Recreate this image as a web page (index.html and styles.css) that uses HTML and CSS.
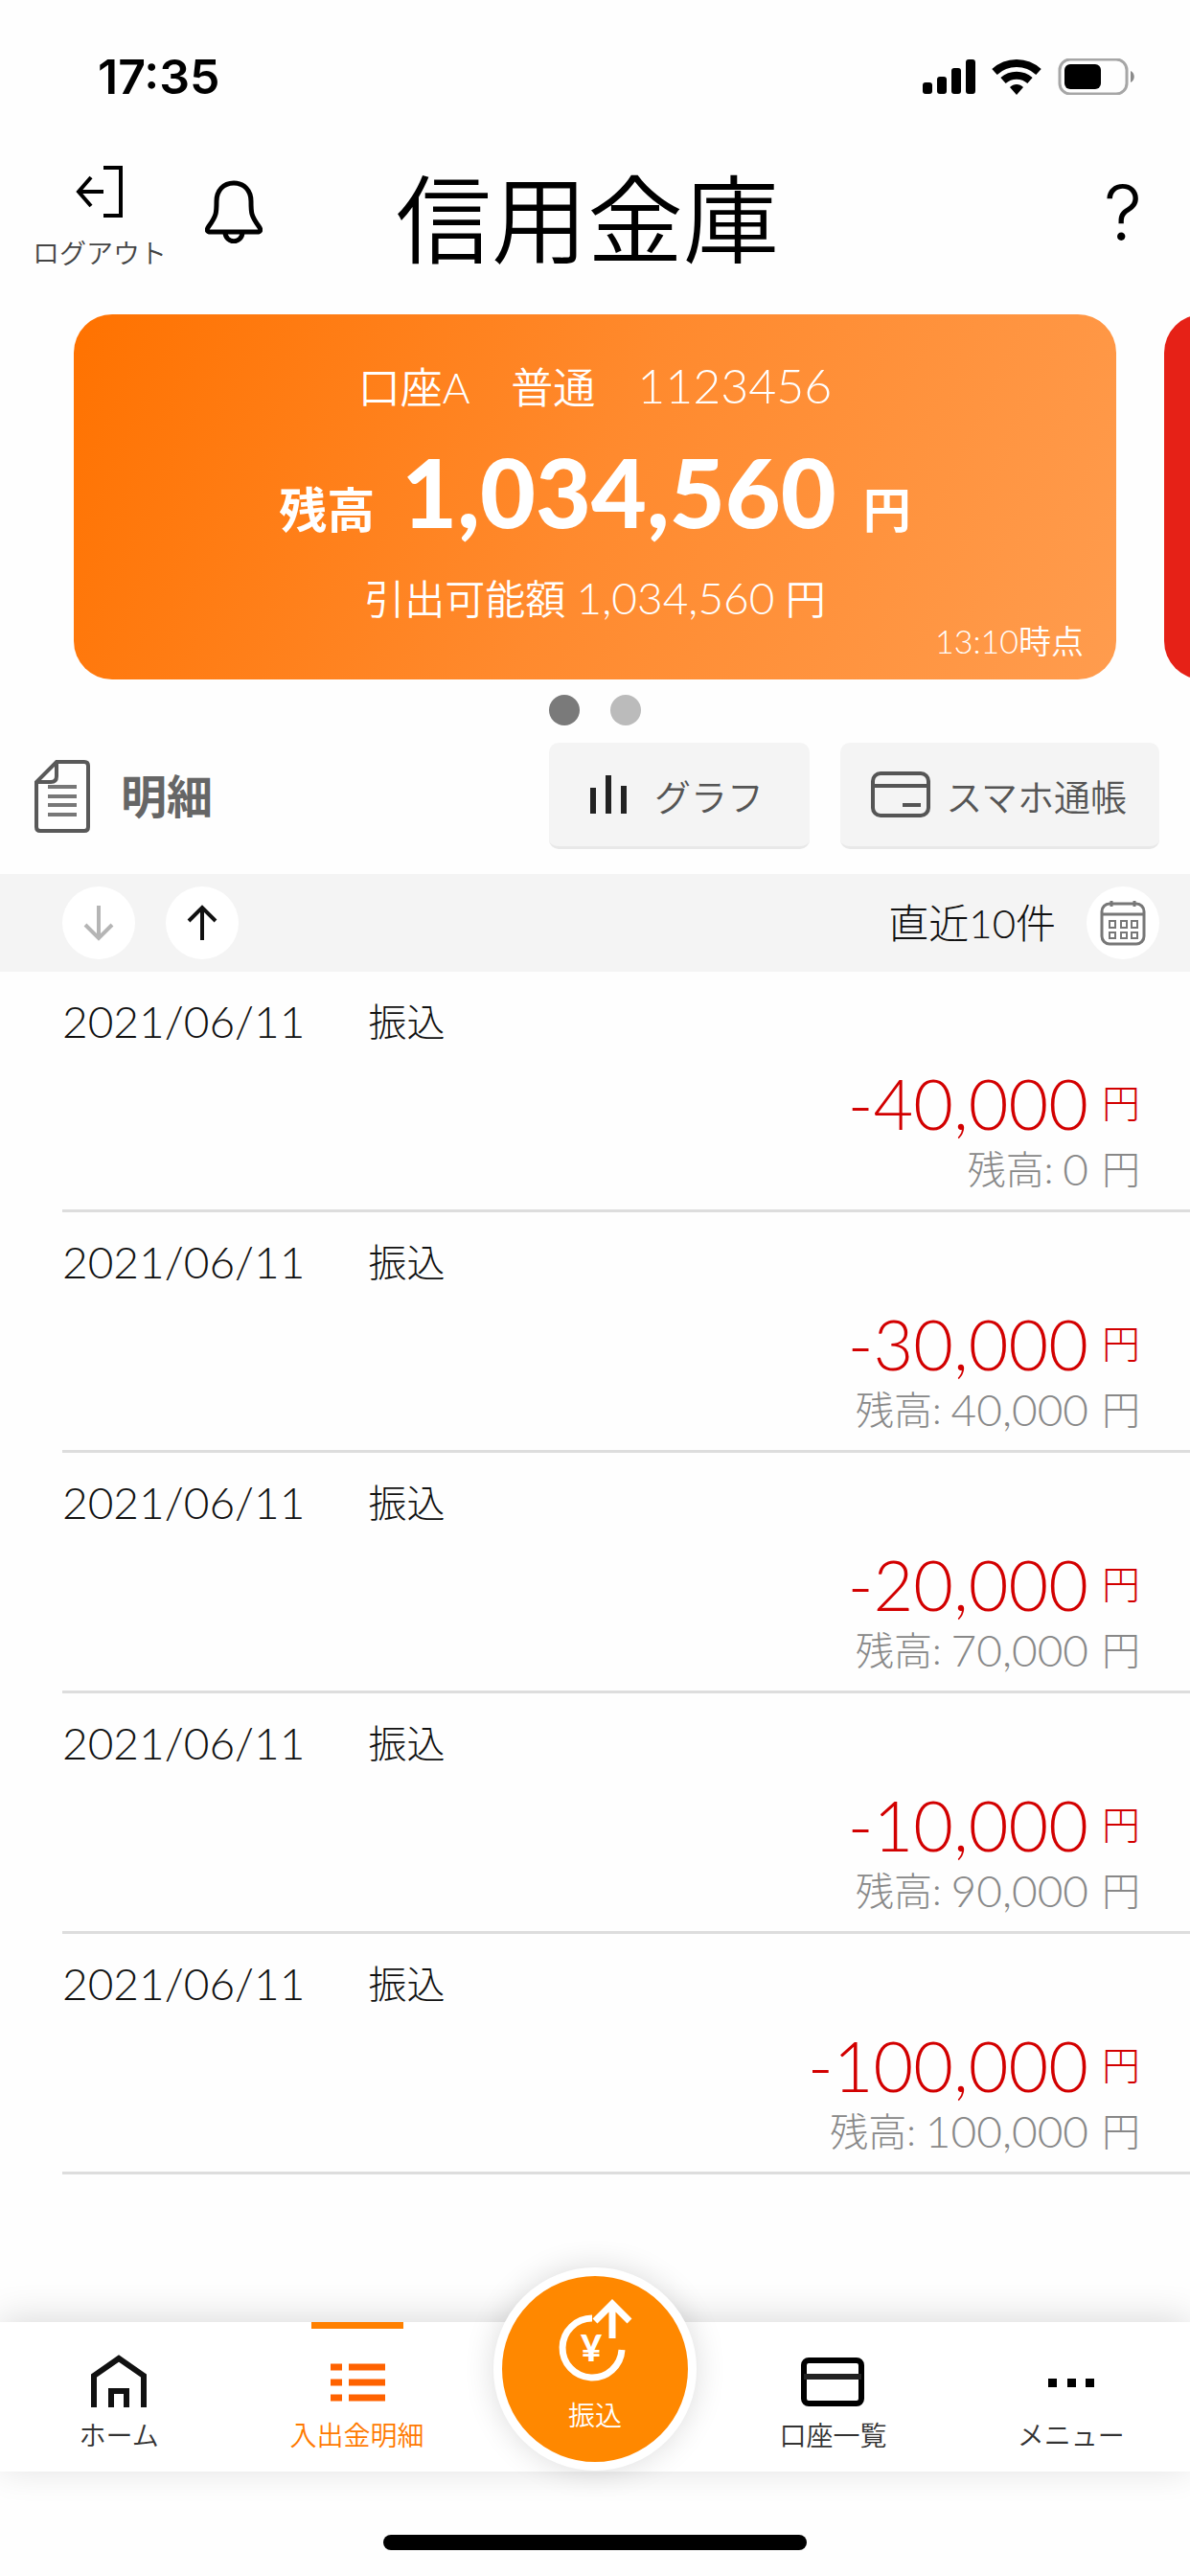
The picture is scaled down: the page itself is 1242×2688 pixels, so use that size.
FILE: index.html
```html
<!DOCTYPE html>
<html lang="ja">
	<head>
	<meta charset="UTF-8">
	<meta name="viewport" content="width=device-width, initial-scale=1">
	<title>信用金庫</title>
		<link rel="stylesheet" href="styles.css">
	</head>
	<body>

		<div class="statusBar">
			<span class="clock">17:35</span>
			<div class="statusIcons">
				<svg width="56" height="38" viewBox="0 0 56 38">
					<rect x="1" y="25" width="10" height="12" rx="3"/>
					<rect x="16" y="19" width="10" height="18" rx="3"/>
					<rect x="31" y="10" width="10" height="27" rx="3"/>
					<rect x="46" y="1" width="10" height="36" rx="3"/>
				</svg>
				<svg width="52" height="38" viewBox="0 0 52 38">
					<path d="M3 14C16 2 36 2 49 14" fill="none" stroke="#000" stroke-width="8"/>
					<path d="M12 23C20 16 32 16 40 23" fill="none" stroke="#000" stroke-width="8"/>
					<path d="M19 30C23 26 29 26 33 30L26 38Z"/>
				</svg>
				<svg width="82" height="38" viewBox="0 0 82 38">
					<rect x="2" y="1" width="70" height="36" rx="11" fill="none" stroke="#a6a6a6" stroke-width="3"/>
					<rect x="7" y="6" width="38" height="26" rx="6"/>
					<path d="M76 13C81 15 81 23 76 25Z" fill="#8a8a8a"/>
				</svg>
			</div>
		</div>

		<header class="header">
			<div class="headerLeft">
				<button type="button" class="logoutBTN">
					<svg width="52" height="56" viewBox="0 0 52 56" fill="none" stroke="#000" stroke-width="4">
						<path d="M30 3H48V53H30M30 28H4M17 13L4 28L17 43"/>
					</svg>
					<span>ログアウト</span>
				</button>
				<button type="button" class="bellBTN" aria-label="お知らせ">
					<svg width="60" height="66" viewBox="0 0 60 66" fill="none" stroke="#000" stroke-width="5" stroke-linejoin="round">
						<path d="M30 3C19 3 12 11 12 22C12 34 12 37 4 48C1 52 2 54 6 54H54C58 54 59 52 56 48C48 37 48 34 48 22C48 11 41 3 30 3Z"/>
						<path d="M21 54C21 67 39 67 39 54"/>
					</svg>
				</button>
			</div>
			<h1 class="bankName">信用金庫</h1>
			<button type="button" class="helpBTN" aria-label="ヘルプ">?</button>
		</header>

		<main>
			<div class="cardSlider">
				<section class="card">
					<p class="account">口座A　普通　<span class="num">1123456</span></p>
					<p class="balance"><span>残高</span><strong>1,034,560</strong><span>円</span></p>
					<p class="available">引出可能額 <span class="num">1,034,560</span> 円</p>
					<p class="asOf">13:10時点</p>
				</section>
				<section class="card cardRed"></section>
			</div>
			<div class="dots">
				<span class="dot dotOn"></span>
				<span class="dot"></span>
			</div>

			<div class="detailHead">
				<svg width="58" height="76" viewBox="0 0 58 76" fill="none" stroke="#595959" stroke-width="4">
					<path d="M23 2H52Q56 2 56 6V70Q56 74 52 74H6Q2 74 2 70V23Z"/>
					<path d="M23 3V17Q23 23 17 23H3"/>
					<path d="M14 28H44M14 38H44M14 47H44M14 57H44" stroke="#777"/>
				</svg>
				<h2>明細</h2>
				<button type="button" class="subBTN">
					<svg width="40" height="42" viewBox="0 0 40 42" stroke="#222" stroke-width="6">
						<path d="M4 14V41M20 1V41M36 12V41"/>
					</svg>
					グラフ
				</button>
				<button type="button" class="subBTN passbook">
					<svg width="62" height="48" viewBox="0 0 62 48" fill="none" stroke="#555" stroke-width="4">
						<rect x="2" y="2" width="58" height="44" rx="8"/>
						<path d="M2 15H60M33 35H52"/>
					</svg>
					スマホ通帳
				</button>
			</div>

			<div class="sortBar">
				<button type="button" class="roundBTN" aria-label="古い順">
					<svg width="32" height="38" viewBox="0 0 32 38" fill="none" stroke="#b5b5b5" stroke-width="4">
						<path d="M16 1V35M2 21L16 35L30 21"/>
					</svg>
				</button>
				<button type="button" class="roundBTN" aria-label="新しい順">
					<svg width="32" height="38" viewBox="0 0 32 38" fill="none" stroke="#111" stroke-width="4">
						<path d="M16 37V3M2 17L16 3L30 17"/>
					</svg>
				</button>
				<span class="range">直近10件</span>
				<button type="button" class="roundBTN" aria-label="期間を選ぶ">
					<svg width="48" height="48" viewBox="0 0 48 48" fill="none" stroke="#777" stroke-width="3">
						<rect x="2" y="4" width="44" height="42" rx="8"/>
						<path d="M2 15H46M12 1V7M36 1V7"/>
						<g stroke-width="2">
							<rect x="10" y="22" width="6" height="7"/>
							<rect x="22" y="22" width="6" height="7"/>
							<rect x="33" y="22" width="6" height="7"/>
							<rect x="10" y="34" width="6" height="6"/>
							<rect x="22" y="34" width="6" height="6"/>
							<rect x="33" y="34" width="6" height="6"/>
						</g>
					</svg>
				</button>
			</div>

			<ul class="history">
				<li>
					<p class="when"><time datetime="2021-06-11">2021/06/11</time><span>振込</span></p>
					<p class="amount">-40,000 <span>円</span></p>
					<p class="rest">残高: <span class="num">0</span> <span class="yen">円</span></p>
				</li>
				<li>
					<p class="when"><time datetime="2021-06-11">2021/06/11</time><span>振込</span></p>
					<p class="amount">-30,000 <span>円</span></p>
					<p class="rest">残高: <span class="num">40,000</span> <span class="yen">円</span></p>
				</li>
				<li>
					<p class="when"><time datetime="2021-06-11">2021/06/11</time><span>振込</span></p>
					<p class="amount">-20,000 <span>円</span></p>
					<p class="rest">残高: <span class="num">70,000</span> <span class="yen">円</span></p>
				</li>
				<li>
					<p class="when"><time datetime="2021-06-11">2021/06/11</time><span>振込</span></p>
					<p class="amount">-10,000 <span>円</span></p>
					<p class="rest">残高: <span class="num">90,000</span> <span class="yen">円</span></p>
				</li>
				<li>
					<p class="when"><time datetime="2021-06-11">2021/06/11</time><span>振込</span></p>
					<p class="amount">-100,000 <span>円</span></p>
					<p class="rest">残高: <span class="num">100,000</span> <span class="yen">円</span></p>
				</li>
			</ul>
		</main>

		<nav class="tabBar">
			<a href="#home">
				<svg width="60" height="56" viewBox="0 0 60 56" fill="none" stroke="#111" stroke-width="6">
					<path d="M4 55V22L30 4L56 22V55M22 55V38H38V55"/>
				</svg>
				ホーム
			</a>
			<a href="#history" class="active">
				<svg width="60" height="56" viewBox="0 0 60 56" fill="none" stroke="#ff6200" stroke-width="7">
					<path d="M2 13H14M21 13H59M2 29H14M21 29H59M2 45H14M21 45H59"/>
				</svg>
				入出金明細
			</a>
			<a href="#transfer" class="transfer">
				<svg width="80" height="88" viewBox="0 0 80 88" fill="none" stroke="#fff" stroke-width="7">
					<path d="M37 21A31 31 0 1 0 68 54"/>
					<path d="M58 42V6M40 24L58 6L76 24"/>
					<text x="36" y="66" class="yenMark">¥</text>
				</svg>
				振込
			</a>
			<a href="#accounts">
				<svg width="68" height="56" viewBox="0 0 68 56" fill="none" stroke="#000" stroke-width="6">
					<rect x="4" y="6" width="60" height="45" rx="5"/>
					<path d="M4 23H64" stroke="#222"/>
				</svg>
				口座一覧
			</a>
			<a href="#menu">
				<svg width="60" height="56" viewBox="0 0 60 56">
					<path d="M6 25h9v9h-9zM26 25h9v9h-9zM45 25h9v9h-9z"/>
				</svg>
				メニュー
			</a>
		</nav>
		<div class="homeArea"><div class="homeLine"></div></div>

	</body>
</html>
```
FILE: styles.css
```css
* {
	box-sizing: border-box;
}

body {
	display: flex;
	flex-direction: column;
	min-height: 100vh;
	margin: 0;
	overflow-x: hidden;
	background-color: #fefefe;
	color: #333;
	font-family: Lato, "Noto Sans CJK JP", sans-serif;
	font-weight: 350;
}

h1, h2, p, ul {
	margin: 0;
	padding: 0;
}

ul {
	list-style: none;
}

svg {
	display: block;
	flex: none;
}

button {
	padding: 0;
	border: 0;
	background: none;
	color: inherit;
	font: inherit;
	cursor: pointer;
}

.statusBar {
	display: flex;
	justify-content: space-between;
	align-items: center;
	height: 160px;
	padding: 0 56px 0 102px;
}

.clock {
	color: #000;
	font-family: Inter, sans-serif;
	font-size: 50px;
	font-weight: 600;
}

.statusIcons {
	display: flex;
	gap: 17px;
}

.header {
	display: grid;
	grid-template-columns: 1fr auto 1fr;
	align-items: center;
	height: 136px;
	padding: 0 50px 0 34px;
}

.headerLeft {
	display: flex;
	align-items: center;
	gap: 40px;
}

.logoutBTN {
	display: flex;
	flex-direction: column;
	align-items: center;
	gap: 16px;
	color: #444;
	font-size: 28px;
	line-height: 40px;
}

.bellBTN {
	padding-bottom: 14px;
}

.bankName {
	color: #000;
	font-size: 100px;
	font-weight: 350;
	line-height: 136px;
}

.helpBTN {
	justify-self: end;
	padding-bottom: 12px;
	color: #000;
	font-family: Inter, sans-serif;
	font-size: 80px;
	font-weight: 300;
	line-height: 100px;
}

.cardSlider {
	display: flex;
	gap: 50px;
	margin-top: 32px;
	padding-left: 77px;
	overflow: hidden;
}

.card {
	flex: 0 0 calc(100% - 77px);
	padding: 40px 34px 21px;
	border-radius: 40px;
	background: linear-gradient(115deg, #ff7200, #ff8a2e 50%, #ff9c4e);
	color: #fff;
	text-align: center;
}

.cardRed {
	background: #e62117;
}

.num {
	line-height: 1;
}

.account {
	font-size: 44px;
	line-height: 72px;
}

.account .num {
	font-size: 50px;
}

.balance {
	display: flex;
	justify-content: center;
	align-items: baseline;
	gap: 28px;
	font-size: 50px;
	font-weight: 700;
	line-height: 1;
}

.balance strong {
	font-size: 100px;
	line-height: 144px;
}

.available {
	padding-top: 16px;
	font-size: 42px;
	line-height: 50px;
}

.available .num {
	font-size: 46px;
}

.asOf {
	font-size: 34px;
	line-height: 38px;
	text-align: right;
}

.dots {
	display: flex;
	justify-content: center;
	gap: 32px;
	padding: 16px 0 18px;
}

.dot {
	width: 32px;
	height: 32px;
	border-radius: 50%;
	background-color: #bbb;
}

.dotOn {
	background-color: #7a7a7a;
}

.detailHead {
	display: flex;
	align-items: center;
	gap: 32px;
	padding: 0 32px 26px 36px;
}

.detailHead h2 {
	margin-right: auto;
	color: #666;
	font-size: 48px;
	line-height: 64px;
}

.subBTN {
	display: flex;
	justify-content: center;
	align-items: center;
	gap: 28px;
	height: 111px;
	padding: 0 48px 0 42px;
	border-bottom: 3px solid #e8e8e8;
	border-radius: 10px;
	background-color: #f4f4f4;
	color: #555;
	font-size: 38px;
}

.passbook {
	gap: 16px;
	padding: 0 34px 0 32px;
}

.sortBar {
	display: flex;
	align-items: center;
	gap: 32px;
	height: 102px;
	padding: 0 32px 0 65px;
	background-color: #f4f4f4;
}

.roundBTN {
	display: flex;
	justify-content: center;
	align-items: center;
	width: 76px;
	height: 76px;
	border-radius: 50%;
	background-color: #fff;
}

.range {
	margin-left: auto;
	color: #111;
	font-size: 42px;
	font-weight: 300;
	line-height: 64px;
}

.history {
	font-weight: 300;
}

.history li {
	margin-left: 65px;
	padding: 20px 52px 18px 0;
	border-bottom: 3px solid #ddd;
}

.when {
	display: flex;
	gap: 66px;
	color: #111;
	font-size: 40px;
	line-height: 64px;
}

.when time {
	font-size: 46px;
}

.amount {
	display: flex;
	justify-content: flex-end;
	align-items: center;
	gap: 14px;
	margin-top: 8px;
	color: #d20000;
	font-size: 72px;
	line-height: 90px;
}

.amount span {
	font-size: 40px;
}

.rest {
	display: flex;
	justify-content: flex-end;
	align-items: center;
	gap: 10px;
	color: #888;
	font-size: 40px;
	line-height: 48px;
}

.rest .num {
	font-size: 46px;
}

.rest .yen {
	margin-left: 4px;
}

.tabBar {
	display: grid;
	grid-template-columns: repeat(5, 1fr);
	height: 156px;
	margin-top: auto;
	background-color: #fff;
	box-shadow: 0 -4px 36px rgba(0,0,0,0.14);
}

.tabBar a {
	display: flex;
	flex-direction: column;
	align-items: center;
	gap: 8px;
	padding-top: 34px;
	color: #333;
	font-size: 28px;
	line-height: 40px;
	text-decoration: none;
}

.tabBar .active {
	color: #ff7a00;
	background: linear-gradient(#ff8000, #ff8000) top center / 96px 7px no-repeat;
}

/* big round button that sticks out over the bar */
.tabBar .transfer {
	justify-self: center;
	gap: 14px;
	width: 212px;
	height: 212px;
	margin-top: -57px;
	padding-top: 23px;
	border: 9px solid #fff;
	border-radius: 50%;
	background-color: #ff8800;
	box-shadow: 0 0 32px rgba(0,0,0,0.14);
	color: #fff;
}

.yenMark {
	fill: #fff;
	stroke: none;
	font-size: 38px;
	font-weight: 900;
	text-anchor: middle;
}

.homeArea {
	display: flex;
	justify-content: center;
	height: 109px;
	padding-top: 66px;
}

.homeLine {
	width: 442px;
	height: 16px;
	border-radius: 8px;
	background-color: #000;
}
```
